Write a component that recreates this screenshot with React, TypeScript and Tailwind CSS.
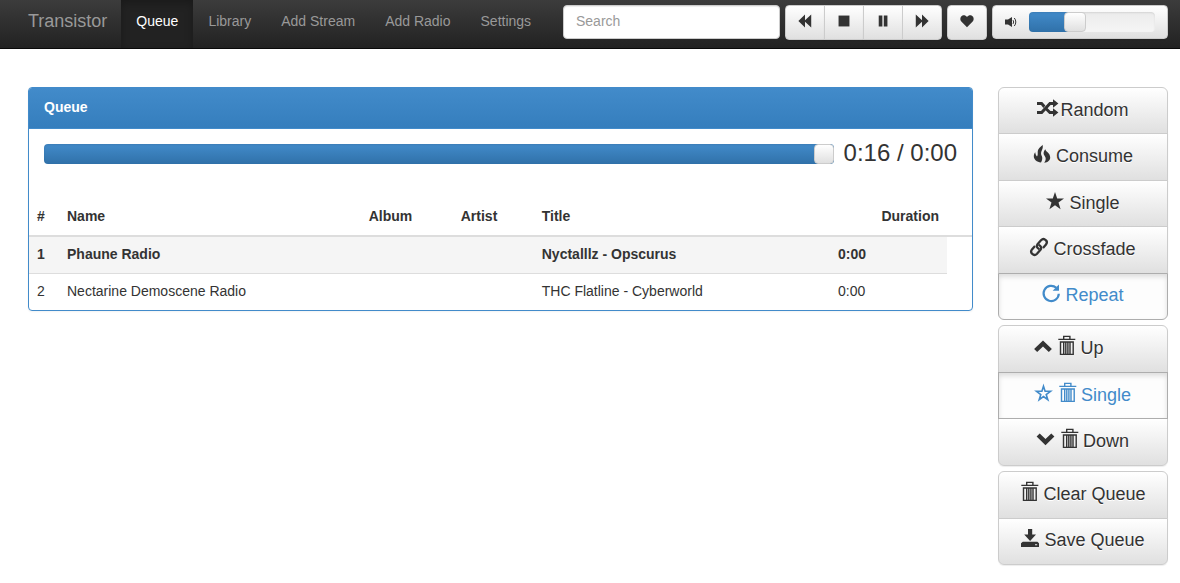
import { useState } from "react";
import type { ReactNode } from "react";

const raised =
  "bg-gradient-to-b from-white to-[#e0e0e0] border border-[#ccc] text-[#333] [text-shadow:0_1px_0_#fff] shadow-[inset_0_1px_0_rgba(255,255,255,0.15),0_1px_1px_rgba(0,0,0,0.075)]";
const pressed =
  "relative bg-[#fdfdfd] border border-[#adadad] text-[#428bca] shadow-[inset_0_3px_5px_rgba(0,0,0,0.125)]";

function Glyph({ children, small = false }: { children: ReactNode; small?: boolean }) {
  return (
    <svg
      viewBox="0 0 18 18"
      fill="currentColor"
      aria-hidden="true"
      className={small ? "h-[14px] w-[14px] overflow-visible" : "-mt-1 h-[18px] w-[18px] shrink-0 overflow-visible"}
    >
      {children}
    </svg>
  );
}

const Shuffle = () => (
  <Glyph>
    <path d="M0 3h5.2l3.2 3.6-2 2.3L4 6H0zM0 12h4l8.3-9H16V.2l5.4 4.3L16 8.8V6h-2.400L5.300 15H0zM10.600 9.200l2.900 2.800H16V9.200l5.400 4.300L16 17.800V15h-3.700l-3.700-3.700z" />
  </Glyph>
);
const Fire = () => (
  <Glyph>
    <path d="M9.600-.3c.8 3.300-.6 5-1.300 7-.6 1.900 0 3.200.5 4.400.8 2 .6 3.800-.8 6.500C3.800 17 .8 14.700.8 11.300c0-1.500.6-3 1.500-4 .1 1.600.6 3 1.700 4.100C4.900 10.400 4.700 8.800 4.700 7 4.700 3.700 7.400 2.200 9.600-.3z" />
    <path d="M12.300 4.200c.3 2.400 4.900 3.600 4.900 8.300 0 2.900-2.300 4.900-6 5.300 1.200-1.800 1.900-3.500 1.300-5.300-.5-1.500-1.700-2.300-1.900-4 0-1.700.6-3 1.700-4.300z" />
  </Glyph>
);
const Star = () => (
  <Glyph>
    <path d="M9 0l2.200 6.600H18l-5.500 4 2.100 6.700L9 13.200l-5.600 4.100 2.100-6.700L0 6.600h6.800z" />
  </Glyph>
);
const StarOutline = () => (
  <Glyph>
    <path
      d="M8.500 2.200l1.600 5.100h5.400l-4.300 3.200 1.600 5.200-4.300-3.200-4.300 3.200 1.600-5.200-4.300-3.200h5.400z"
      fill="none"
      stroke="currentColor"
      strokeWidth="1.600"
    />
  </Glyph>
);
const Chain = () => (
  <Glyph>
    <g fill="none" stroke="currentColor" strokeWidth="2.300">
      <path d="M9.500 11.200C7 10 6 8 7.500 6.200L11 2.300C12.500.8 14.500.9 15.800 2.200 17.200 3.500 17 5.300 16 6.600L13 10" />
      <path d="M8.500 6.800C11 8 12 10 10.500 11.800L7 15.700C5.500 17.200 3.500 17.100 2.200 15.800.8 14.500 1 12.700 2 11.400L5 8" />
    </g>
  </Glyph>
);
const Repeat = () => (
  <Glyph>
    <path d="M14.300 3.800A7.600 7.600 0 1 0 16.800 9.800" fill="none" stroke="currentColor" strokeWidth="2.200" />
    <path d="M17 .6v6.200h-6.400z" />
  </Glyph>
);
const Trash = () => (
  <Glyph>
    <path
      d="M6.700 1.800V-.6h6.200v2.400M1.300 2.400h17M3.500 5v12.400h12.700V5zM6.700 5v12M8.800 5v12M10.900 5v12M13 5v12"
      fill="none"
      stroke="currentColor"
      strokeWidth="1.400"
    />
  </Glyph>
);
const ChevronUp = () => (
  <Glyph>
    <path d="M9 3.600l8.900 8.400-3.100 3L9 9.600 3.200 15 .1 12z" />
  </Glyph>
);
const ChevronDown = () => (
  <Glyph>
    <path d="M8.500 15.200L-.4 6.600l3.100-3 5.800 5.500 5.800-5.500 3.100 3z" />
  </Glyph>
);
const Save = () => (
  <Glyph>
    <path d="M7 0h4.200v5.500H15L9.100 12 3.200 5.500H7z" />
    <path d="M1.800 12.700h14.600L18 14.200V18H0v-3.800zM14 15.200v1h2.200v-1z" fillRule="evenodd" />
  </Glyph>
);

type Action = { label: string; icon: ReactNode; active?: boolean; trailing?: boolean };

function ActionGroup({ actions, height }: { actions: Action[]; height: string }) {
  return (
    <div role="group" className={`flex flex-col ${height}`}>
      {actions.map((a) => (
        <button
          key={a.label}
          type="button"
          aria-pressed={a.active}
          className={`-mt-px flex min-h-0 flex-1 items-center justify-center gap-[5px] pb-0.5 text-lg leading-6 first:mt-0 first:rounded-t-md last:rounded-b-md ${a.active ? pressed : raised} ${a.trailing ? "pr-7" : ""}`}
        >
          {a.icon}
          <span>{a.label}</span>
        </button>
      ))}
    </div>
  );
}

function Slider({
  label,
  initial,
  className,
}: {
  label: string;
  initial: number;
  className: string;
}) {
  const [value, setValue] = useState(initial);
  return (
    <input
      type="range"
      aria-label={label}
      value={value}
      onChange={(e) => setValue(Number(e.target.value))}
      style={{
        backgroundImage: "linear-gradient(#428bca, #3071a9), linear-gradient(#ebebeb, #f5f5f5)",
        backgroundSize: `${value}% 100%, 100% 100%`,
      }}
      className={`h-5 min-w-0 appearance-none rounded bg-no-repeat shadow-[inset_0_1px_2px_rgba(0,0,0,0.1)] [&::-webkit-slider-thumb]:h-5 [&::-webkit-slider-thumb]:appearance-none [&::-webkit-slider-thumb]:rounded [&::-webkit-slider-thumb]:border [&::-webkit-slider-thumb]:border-[#ccc] [&::-webkit-slider-thumb]:bg-gradient-to-b [&::-webkit-slider-thumb]:from-white [&::-webkit-slider-thumb]:to-[#e0e0e0] ${className}`}
    />
  );
}

const playback: { label: string; path: string }[] = [
  { label: "Previous", path: "M9 .5v7.500L17 .5v17L9 10v7.500L.5 9z" },
  { label: "Stop", path: "M2 2h14v14H2z" },
  { label: "Pause", path: "M3.500 2h4.700v14H3.500zM10 2h4.700v14H10z" },
  { label: "Next", path: "M1 .5L9 8V.5L17.500 9 9 17.500V10l-8 7.500z" },
];

const links = ["Queue", "Library", "Add Stream", "Add Radio", "Settings"];

export default function App() {
  return (
    <div className="bg-white font-['Liberation_Sans',Arial,sans-serif] text-sm leading-5 text-[#333]">
      <header className="flex justify-between border-b border-[#090909] bg-gradient-to-b from-[#3c3c3c] to-[#222] pr-3 pl-[13px]">
        <nav className="flex text-[#999]">
          <a href="#" className="pt-[11px] pr-[14px] pb-[17px] pl-[15px] text-lg leading-5">
            Transistor
          </a>
          {links.map((l, i) => (
            <a
              key={l}
              href="#"
              className={`px-[15px] pt-[11px] pb-[17px] whitespace-nowrap ${i === 0 ? "bg-[#222] text-white shadow-[inset_0_3px_9px_rgba(0,0,0,0.25)]" : ""}`}
            >
              {l}
            </a>
          ))}
        </nav>
        <div className="flex items-start gap-[5px] pt-[5px]">
          <input
            type="search"
            aria-label="Search"
            placeholder="Search"
            className="h-[34px] w-[217px] rounded border border-[#ccc] bg-white px-3 pb-0.5 shadow-[inset_0_1px_1px_rgba(0,0,0,0.075)] placeholder:text-[#999]"
          />
          <div role="group" className="flex">
            {playback.map((p) => (
              <button
                key={p.label}
                type="button"
                aria-label={p.label}
                className={`-ml-px flex h-[35px] w-10 items-center justify-center pb-1 first:ml-0 first:rounded-l last:rounded-r ${raised}`}
              >
                <Glyph small>
                  <path d={p.path} />
                </Glyph>
              </button>
            ))}
          </div>
          <button
            type="button"
            aria-label="Favourite"
            className={`flex h-[35px] w-10 items-center justify-center rounded pb-1 ${raised}`}
          >
            <Glyph small>
              <path d="M9 17L1.700 9.700C.2 8.100 0 5.400 1.200 3.500 2.900.7 7.200.8 9 4c1.800-3.200 6.100-3.300 7.800-.5 1.200 1.900 1 4.600-.5 6.200z" />
            </Glyph>
          </button>
          <div className={`flex h-[34px] w-44 items-center gap-3 rounded px-3 ${raised}`}>
            <svg viewBox="0 0 12 12" className="h-3 w-3 shrink-0" fill="currentColor" aria-hidden="true">
              <path d="M0 3.600h3L7 1v10L3 8.400H0z" />
              <path d="M8 4.200c.8 1 .8 2.700 0 3.700M9.300 2c2 2.200 2 5.800 0 8" fill="none" stroke="currentColor" />
            </svg>
            <Slider label="Volume" initial={34} className="flex-1 [&::-webkit-slider-thumb]:w-[22px]" />
          </div>
        </div>
      </header>

      <main className="flex items-start gap-[25px] pt-[38px] pr-3 pb-4 pl-7">
        <section className="min-w-0 flex-1 overflow-hidden rounded border border-[#428bca] shadow-[0_1px_2px_rgba(0,0,0,0.05)]">
          <h1 className="border-b border-[#428bca] bg-gradient-to-b from-[#428bca] to-[#357ebd] px-[15px] pt-[9px] pb-[11px] leading-5 font-bold text-white">
            Queue
          </h1>
          <div className="flex items-start gap-[10px] px-[15px] pt-2">
            <Slider label="Position" initial={100} className="mt-[7px] flex-1 [&::-webkit-slider-thumb]:w-5" />
            <span className="text-2xl leading-8">0:16 / 0:00</span>
          </div>
          <table className="mt-[29px] w-full table-fixed border-collapse text-left">
            <colgroup>
              <col className="w-[30px]" />
              <col className="w-[32%]" />
              <col className="w-[92px]" />
              <col className="w-[81px]" />
              <col />
              <col className="w-[44px]" />
              <col className="w-[73px]" />
              <col className="w-[25px]" />
            </colgroup>
            <thead>
              <tr className="border-b-2 border-[#ddd]">
                <th className="px-2 pt-2 pb-[9px]">#</th>
                <th className="px-2 pt-2 pb-[9px]">Name</th>
                <th className="px-2 pt-2 pb-[9px]">Album</th>
                <th className="px-2 pt-2 pb-[9px]">Artist</th>
                <th className="px-2 pt-2 pb-[9px]">Title</th>
                <th colSpan={2} className="px-2 pt-2 pb-[9px] text-right">
                  Duration
                </th>
                <td />
              </tr>
            </thead>
            <tbody>
              <tr className="font-bold">
                <td className="bg-[#f5f5f5] px-2 pt-[7px] pb-[9px]">1</td>
                <td className="bg-[#f5f5f5] px-2 pt-[7px] pb-[9px]">Phaune Radio</td>
                <td className="bg-[#f5f5f5]" />
                <td className="bg-[#f5f5f5]" />
                <td className="bg-[#f5f5f5] px-2 pt-[7px] pb-[9px]">Nyctalllz - Opscurus</td>
                <td className="bg-[#f5f5f5] px-2 pt-[7px] pb-[9px]">0:00</td>
                <td className="bg-[#f5f5f5]" />
              </tr>
              <tr>
                <td className="border-t border-[#ddd] px-2 pt-[7px] pb-[9px]">2</td>
                <td className="border-t border-[#ddd] px-2 pt-[7px] pb-[9px]">Nectarine Demoscene Radio</td>
                <td className="border-t border-[#ddd]" />
                <td className="border-t border-[#ddd]" />
                <td className="border-t border-[#ddd] px-2 pt-[7px] pb-[9px]">THC Flatline - Cyberworld</td>
                <td className="border-t border-[#ddd] px-2 pt-[7px] pb-[9px]">0:00</td>
                <td className="border-t border-[#ddd]" />
              </tr>
            </tbody>
          </table>
        </section>

        <aside className="flex w-[170px] flex-col gap-[5px]">
          <ActionGroup
            height="h-[233px]"
            actions={[
              { label: "Random", icon: <Shuffle /> },
              { label: "Consume", icon: <Fire /> },
              { label: "Single", icon: <Star /> },
              { label: "Crossfade", icon: <Chain /> },
              { label: "Repeat", icon: <Repeat />, active: true },
            ]}
          />
          <ActionGroup
            height="h-[141px]"
            actions={[
              { label: "Up", icon: <><ChevronUp /><Trash /></>, trailing: true },
              { label: "Single", icon: <><StarOutline /><Trash /></>, active: true },
              { label: "Down", icon: <><ChevronDown /><Trash /></> },
            ]}
          />
          <ActionGroup
            height="h-[94px]"
            actions={[
              { label: "Clear Queue", icon: <Trash /> },
              { label: "Save Queue", icon: <Save /> },
            ]}
          />
        </aside>
      </main>
    </div>
  );
}
